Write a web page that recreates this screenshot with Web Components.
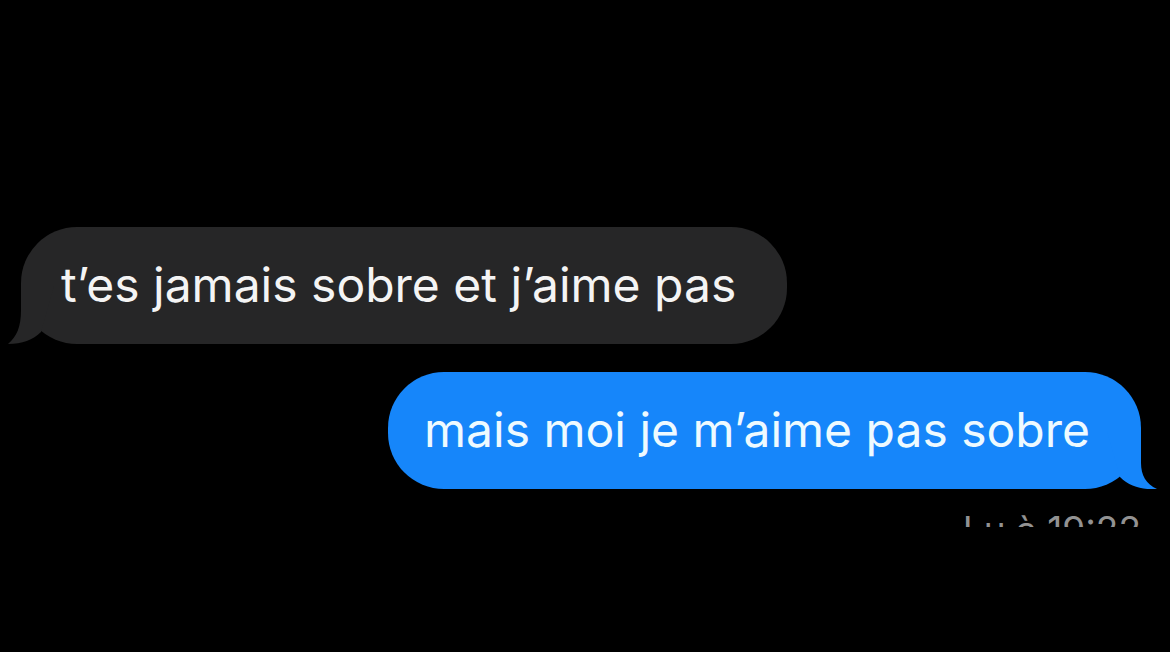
<!DOCTYPE html>
<html lang="fr">
<head>
  <meta charset="utf-8">
  <meta name="viewport" content="width=device-width, initial-scale=1">
  <title>Messages</title>
  <style>
    body {
      margin: 0;
      background: #000;
      font-family: Inter, "Liberation Sans", sans-serif;
    }
  </style>
</head>
<body>
  <message-thread>
    <message-bubble>t’es jamais sobre et j’aime pas</message-bubble>
    <message-bubble sent>mais moi je m’aime pas sobre</message-bubble>
    <read-receipt slot="status">Lu à 19:22</read-receipt>
  </message-thread>

  <template id="thread">
    <style>
      :host {
        display: block;
        box-sizing: border-box;
        min-height: 100vh;
        padding: 227px 29px 0 21px;
      }
      main {
        display: flex;
        flex-direction: column;
        gap: 28px;
      }
    </style>
    <main><slot></slot></main>
    <slot name="status"></slot>
  </template>

  <template id="bubble">
    <style>
      :host {
        --fill: #262627;
        display: block;
        position: relative;
        align-self: flex-start;
        padding: 28px 51px 29px 40px;
        border-radius: 56px;
        background: var(--fill);
        color: #f4f4f4;
        font-size: 48px;
        line-height: 60px;
      }
      :host([sent]) {
        --fill: #1686fa;
        align-self: flex-end;
        padding-left: 36px;
        color: #eefaff;
      }
      p {
        margin: 0;
      }
      .tail {
        position: absolute;
        left: -13px;
        bottom: 0;
        width: 53px;
        height: 58px;
        fill: var(--fill);
      }
      :host([sent]) .tail {
        left: auto;
        right: -16px;
        transform: scaleX(-1);
      }
    </style>
    <p><slot></slot></p>
    <svg class="tail" viewBox="0 0 53 58" aria-hidden="true"></svg>
  </template>

  <template id="receipt">
    <style>
      :host {
        display: block;
        height: 17px;
        margin-top: 21px;
        overflow: hidden;
        color: #929292;
        font-size: 37px;
        line-height: 40px;
        text-align: right;
      }
    </style>
    <slot></slot>
  </template>

  <script>
    const clone = id => document.getElementById(id).content.cloneNode(true);

    class MessageThread extends HTMLElement {
      constructor() {
        super();
        this.attachShadow({ mode: 'open' }).appendChild(clone('thread'));
      }
    }

    // the sent tail sticks out a little further than the received one
    const tails = {
      received: 'M13 0V24C13 41 9 50 0 58C14 58 25 54 33 46L46 0Z',
      sent: 'M16 0V32C16 44 11 53 0 58C14 59 27 56 37 46L50 0Z'
    };

    class MessageBubble extends HTMLElement {
      constructor() {
        super();
        this.attachShadow({ mode: 'open' }).appendChild(clone('bubble'));
      }

      connectedCallback() {
        const shape = this.hasAttribute('sent') ? tails.sent : tails.received;
        this.shadowRoot.querySelector('.tail').innerHTML = `<path d="${shape}"/>`;
      }
    }

    class ReadReceipt extends HTMLElement {
      constructor() {
        super();
        this.attachShadow({ mode: 'open' }).appendChild(clone('receipt'));
      }
    }

    customElements.define('message-thread', MessageThread);
    customElements.define('message-bubble', MessageBubble);
    customElements.define('read-receipt', ReadReceipt);
  </script>
</body>
</html>
